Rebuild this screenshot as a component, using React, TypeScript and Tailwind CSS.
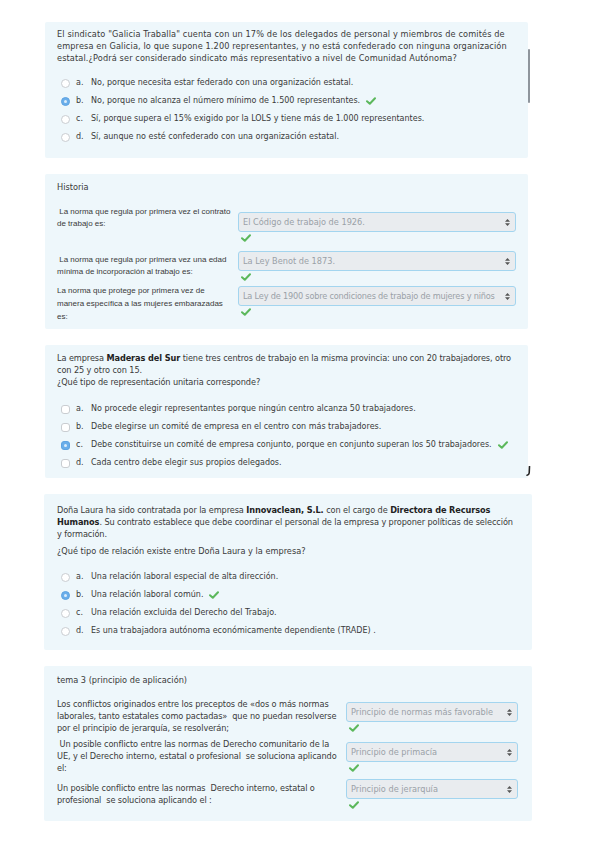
import React from "react";

const verdana = { fontFamily: '"DejaVu Sans", Verdana, sans-serif' };
const arial = { fontFamily: '"Liberation Sans", Arial, sans-serif' };

function Check({ className = "" }: { className?: string }) {
    return (
        <svg width="10" height="8" viewBox="0 0 10 8" className={className}>
            <path d="M1 4.2 L3.8 6.8 L9 1.2" fill="none" stroke="#5cb85c" strokeWidth="2" strokeLinecap="round" strokeLinejoin="round" />
        </svg>
    );
}

function Radio({ checked, square }: { checked?: boolean; square?: boolean }) {
    const shape = square ? "rounded-[3px]" : "rounded-full";
    if (checked) {
        return (
            <span className={`w-[9px] h-[9px] ${shape} bg-[#6aaeea] border border-[#5ea3e2] flex items-center justify-center shrink-0`}>
                <span className="w-[3px] h-[3px] rounded-full bg-[#dcecfb]" />
            </span>
        );
    }
    return <span className={`w-[9px] h-[9px] ${shape} bg-white border border-[#c9cdd1] shrink-0`} />;
}

type Opt = { letter: string; text: string; checked?: boolean };

function Options({ items, square }: { items: Opt[]; square?: boolean }) {
    return (
        <div className="flex flex-col text-[8px]">
            {items.map((o) => (
                <div key={o.letter} className="h-[18px] flex items-center ml-[4px] whitespace-nowrap">
                    <Radio checked={o.checked} square={square} />
                    <span className="ml-[6px] w-[15px]">{o.letter}.</span>
                    <span>{o.text}</span>
                    {o.checked && <Check className="ml-[6px]" />}
                </div>
            ))}
        </div>
    );
}

function Select({ value, tight }: { value: string; tight?: boolean }) {
    return (
        <div className="h-[20px] flex items-center justify-between border border-[#a3d5ef] bg-[#e9ecef] rounded-[3px] pl-[4px] pr-[5px] text-[#9aa1a7]" style={verdana}>
            <span className={`whitespace-nowrap overflow-hidden ${tight ? "tracking-[-0.2px]" : ""}`}>{value}</span>
            <svg width="5" height="7" viewBox="0 0 5 7" className="shrink-0 ml-[1px]">
                <path d="M2.5 0 L5 2.8 L0 2.8 Z M2.5 7 L5 4.2 L0 4.2 Z" fill="#555" />
            </svg>
        </div>
    );
}

function Lines({ lines, className = "" }: { lines: React.ReactNode[]; className?: string }) {
    return (
        <div className={className}>
            {lines.map((l, i) => (
                <div key={i} className="whitespace-nowrap">{l}</div>
            ))}
        </div>
    );
}

export default function App() {
    return (
        <div className="w-[599px] min-h-[848px] bg-white text-[8.2px] text-[#3a3a3a] leading-[12px] pt-[22px] pb-[28px] flex flex-col gap-[16px]" style={verdana}>
            {/* Pregunta 1 */}
            <div className="relative ml-[45px] w-[483px] bg-[#eef7fb] rounded-[2px] pl-[12px] pr-[12px] pt-[6px] pb-[12px]">
                <Lines
                    className="tracking-[0.12px]"
                    lines={[
                        'El sindicato "Galicia Traballa" cuenta con un 17% de los delegados de personal y miembros de comités de',
                        "empresa en Galicia, lo que supone 1.200 representantes, y no está confederado con ninguna organización",
                        "estatal.¿Podrá ser considerado sindicato más representativo a nivel de Comunidad Autónoma?",
                    ]}
                />
                <div className="mt-[10px]">
                    <Options
                        items={[
                            { letter: "a", text: "No, porque necesita estar federado con una organización estatal." },
                            { letter: "b", text: "No, porque no alcanza el número mínimo de 1.500 representantes.", checked: true },
                            { letter: "c", text: "Sí, porque supera el 15% exigido por la LOLS y tiene más de 1.000 representantes." },
                            { letter: "d", text: "Sí, aunque no esté confederado con una organización estatal." },
                        ]}
                    />
                </div>
                <div className="absolute left-[483px] top-[27px] w-[2px] h-[54px] bg-[#8e959c] rounded-full" />
            </div>

            {/* Historia */}
            <div className="ml-[45px] w-[483px] bg-[#eef7fb] rounded-[2px] pl-[12px] pr-[12px] pt-[7px] pb-[11px]">
                <div>Historia</div>
                <div className="mt-[13px] flex gap-[6px]">
                    <div className="w-[175px] shrink-0 text-[8px] leading-[12px]" style={arial}>
                        {"\u00a0"}La norma que regula por primera vez el contrato de trabajo es:
                    </div>
                    <div className="flex-1 min-w-0 mt-[6px]">
                        <Select value="El Código de trabajo de 1926." />
                        <div className="h-[12px] flex items-center pl-[3px]"><Check /></div>
                    </div>
                </div>
                <div className="mt-[7px] flex gap-[6px]">
                    <div className="w-[175px] shrink-0 mt-[3px] text-[8px] leading-[12px]" style={arial}>
                        {"\u00a0"}La norma que regula por primera vez una edad mínima de incorporación al trabajo es:
                    </div>
                    <div className="flex-1 min-w-0">
                        <Select value="La Ley Benot de 1873." />
                        <div className="h-[12px] flex items-center pl-[3px]"><Check /></div>
                    </div>
                </div>
                <div className="mt-[3px] flex gap-[6px]">
                    <div className="w-[172px] h-[33px] shrink-0 -mt-[2px] text-[8px] leading-[13px]" style={arial}>
                        La norma que protege por primera vez de manera específica a las mujeres embarazadas es:
                    </div>
                    <div className="flex-1 min-w-0 ml-[3px]">
                        <Select tight value="La Ley de 1900 sobre condiciones de trabajo de mujeres y niños" />
                        <div className="h-[12px] flex items-center pl-[3px]"><Check /></div>
                    </div>
                </div>
            </div>

            {/* Maderas del Sur */}
            <div className="relative ml-[45px] w-[483px] bg-[#eef7fb] rounded-[2px] pl-[12px] pr-[12px] pt-[7px] pb-[6px]">
                <Lines
                    className="tracking-[-0.1px]"
                    lines={[
                        <>La empresa <b className="text-[#222]">Maderas del Sur</b> tiene tres centros de trabajo en la misma provincia: uno con 20 trabajadores, otro</>,
                        "con 25 y otro con 15.",
                        "¿Qué tipo de representación unitaria corresponde?",
                    ]}
                />
                <div className="mt-[12px]">
                    <Options
                        square
                        items={[
                            { letter: "a", text: "No procede elegir representantes porque ningún centro alcanza 50 trabajadores." },
                            { letter: "b", text: "Debe elegirse un comité de empresa en el centro con más trabajadores." },
                            { letter: "c", text: "Debe constituirse un comité de empresa conjunto, porque en conjunto superan los 50 trabajadores.", checked: true },
                            { letter: "d", text: "Cada centro debe elegir sus propios delegados." },
                        ]}
                    />
                </div>
                <svg width="5" height="10" viewBox="0 0 5 10" className="absolute left-[481px] top-[121px]">
                    <path d="M3.5 0.5 L3.2 7 Q3 9 1 9.2" fill="none" stroke="#222" strokeWidth="1.6" strokeLinecap="round" />
                </svg>
            </div>

            {/* Doña Laura */}
            <div className="ml-[44px] w-[488px] bg-[#eef7fb] rounded-[2px] pl-[13px] pr-[13px] pt-[10px] pb-[10px]">
                <Lines
                    className="tracking-[-0.1px]"
                    lines={[
                        <>Doña Laura ha sido contratada por la empresa <b className="text-[#222]">Innovaclean, S.L.</b> con el cargo de <b className="text-[#222]">Directora de Recursos</b></>,
                        <><b className="text-[#222]">Humanos</b>. Su contrato establece que debe coordinar el personal de la empresa y proponer políticas de selección</>,
                        "y formación.",
                    ]}
                />
                <p className="mt-[5px]">¿Qué tipo de relación existe entre Doña Laura y la empresa?</p>
                <div className="mt-[11px]">
                    <Options
                        items={[
                            { letter: "a", text: "Una relación laboral especial de alta dirección." },
                            { letter: "b", text: "Una relación laboral común.", checked: true },
                            { letter: "c", text: "Una relación excluida del Derecho del Trabajo." },
                            { letter: "d", text: "Es una trabajadora autónoma económicamente dependiente (TRADE) ." },
                        ]}
                    />
                </div>
            </div>

            {/* tema 3 */}
            <div className="ml-[44px] w-[488px] bg-[#eef7fb] rounded-[2px] pl-[13px] pr-[14px] pt-[8px] pb-[10px]">
                <div>tema 3 (principio de aplicación)</div>
                <div className="mt-[12px] flex gap-[7px]">
                    <Lines
                        className="w-[282px] shrink-0 tracking-[-0.1px]"
                        lines={[
                            "Los conflictos originados entre los preceptos de «dos o más normas",
                            "laborales, tanto estatales como pactadas»\u00a0 que no puedan resolverse",
                            "por el principio de jerarquía, se resolverán;",
                        ]}
                    />
                    <div className="flex-1 min-w-0 mt-[4px]">
                        <Select value="Principio de normas más favorable" />
                        <div className="h-[12px] flex items-center pl-[3px]"><Check /></div>
                    </div>
                </div>
                <div className="mt-[4px] flex gap-[7px]">
                    <Lines
                        className="w-[282px] shrink-0 tracking-[-0.1px]"
                        lines={[
                            "\u00a0Un posible conflicto entre las normas de Derecho comunitario de la",
                            "UE, y el Derecho interno, estatal o profesional\u00a0 se soluciona aplicando",
                            "el:",
                        ]}
                    />
                    <div className="flex-1 min-w-0 mt-[4px]">
                        <Select value="Principio de primacía" />
                        <div className="h-[12px] flex items-center pl-[3px]"><Check /></div>
                    </div>
                </div>
                <div className="mt-[5px] flex gap-[7px]">
                    <Lines
                        className="w-[282px] shrink-0 mt-[3px] tracking-[-0.1px]"
                        lines={[
                            "Un posible conflicto entre las normas\u00a0 Derecho interno, estatal o",
                            "profesional\u00a0 se soluciona aplicando el :",
                        ]}
                    />
                    <div className="flex-1 min-w-0">
                        <Select value="Principio de jerarquía" />
                        <div className="h-[12px] flex items-center pl-[3px]"><Check /></div>
                    </div>
                </div>
            </div>
        </div>
    );
}
